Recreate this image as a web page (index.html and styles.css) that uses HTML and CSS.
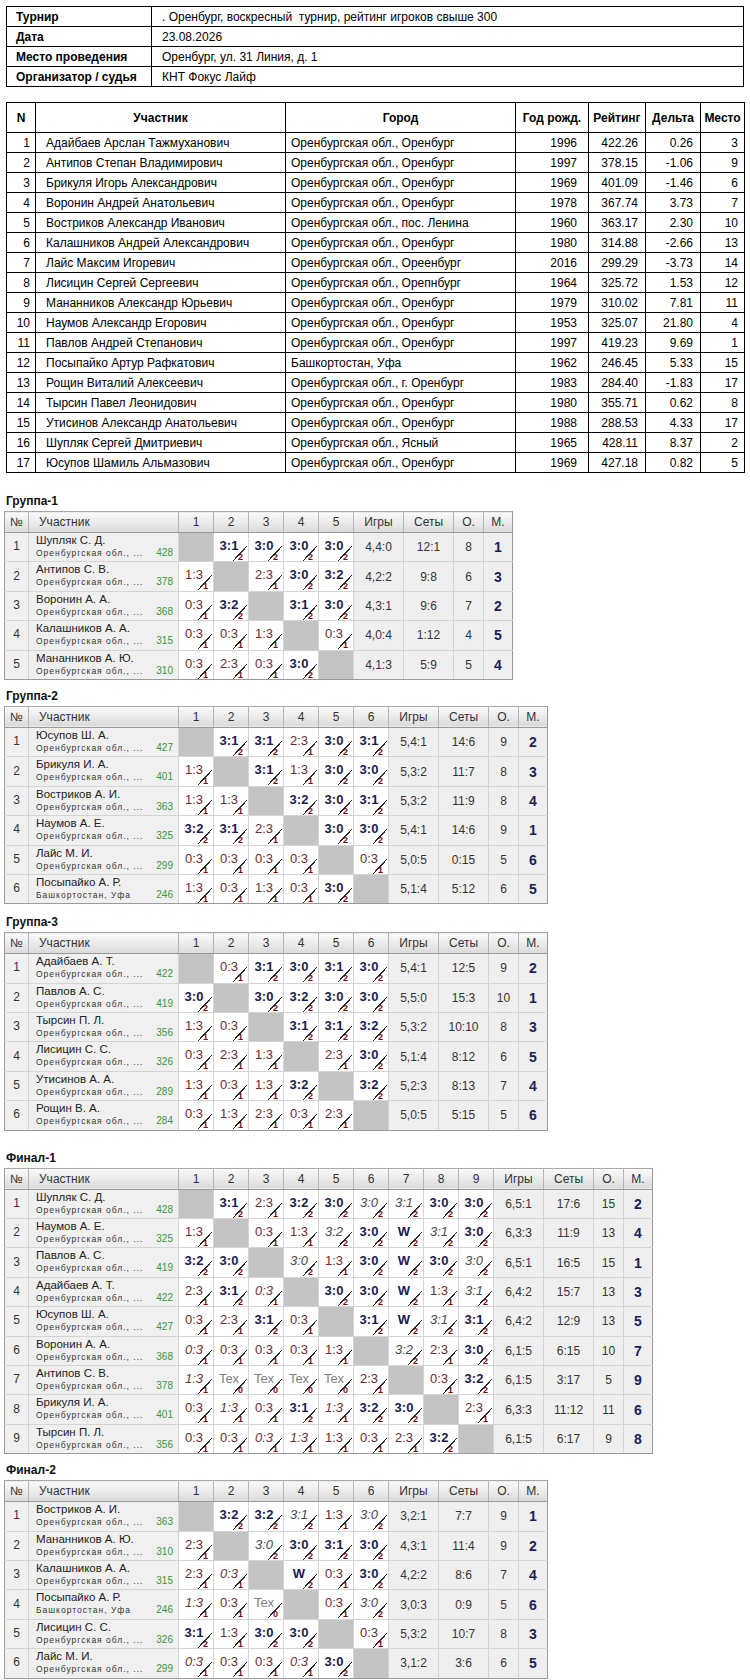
FILE: index.html
```html
<!DOCTYPE html>
<html lang="ru">
<head>
<meta charset="utf-8">
<title>Турнир</title>
<link rel="stylesheet" href="styles.css">
</head>
<body>
<div class="page">

<table class="info">
<tr><td class="k">Турнир</td><td>. Оренбург, воскресный&nbsp; турнир, рейтинг игроков свыше 300</td></tr>
<tr><td class="k">Дата</td><td>23.08.2026</td></tr>
<tr><td class="k">Место проведения</td><td>Оренбург, ул. 31 Линия, д. 1</td></tr>
<tr><td class="k">Организатор / судья</td><td>КНТ Фокус Лайф</td></tr>
</table>

<table class="main">
<colgroup><col class="c1"><col class="c2"><col class="c3"><col class="c4"><col class="c5"><col class="c6"><col class="c7"></colgroup>
<tr><th>N</th><th>Участник</th><th>Город</th><th>Год рожд.</th><th>Рейтинг</th><th>Дельта</th><th>Место</th></tr>
<tr><td class="n">1</td><td class="p">Адайбаев Арслан Тажмуханович</td><td class="c">Оренбургская обл., Оренбург</td><td class="y">1996</td><td class="rt">422.26</td><td class="d">0.26</td><td class="pl">3</td></tr>
<tr><td class="n">2</td><td class="p">Антипов Степан Владимирович</td><td class="c">Оренбургская обл., Оренбург</td><td class="y">1997</td><td class="rt">378.15</td><td class="d">-1.06</td><td class="pl">9</td></tr>
<tr><td class="n">3</td><td class="p">Брикуля Игорь Александрович</td><td class="c">Оренбургская обл., Оренбург</td><td class="y">1969</td><td class="rt">401.09</td><td class="d">-1.46</td><td class="pl">6</td></tr>
<tr><td class="n">4</td><td class="p">Воронин Андрей Анатольевич</td><td class="c">Оренбургская обл., Оренбург</td><td class="y">1978</td><td class="rt">367.74</td><td class="d">3.73</td><td class="pl">7</td></tr>
<tr><td class="n">5</td><td class="p">Востриков Александр Иванович</td><td class="c">Оренбургская обл., пос. Ленина</td><td class="y">1960</td><td class="rt">363.17</td><td class="d">2.30</td><td class="pl">10</td></tr>
<tr><td class="n">6</td><td class="p">Калашников Андрей Александрович</td><td class="c">Оренбургская обл., Оренбург</td><td class="y">1980</td><td class="rt">314.88</td><td class="d">-2.66</td><td class="pl">13</td></tr>
<tr><td class="n">7</td><td class="p">Лайс Максим Игоревич</td><td class="c">Оренбургская обл., Ореенбург</td><td class="y">2016</td><td class="rt">299.29</td><td class="d">-3.73</td><td class="pl">14</td></tr>
<tr><td class="n">8</td><td class="p">Лисицин Сергей Сергеевич</td><td class="c">Оренбургская обл., Орепнбург</td><td class="y">1964</td><td class="rt">325.72</td><td class="d">1.53</td><td class="pl">12</td></tr>
<tr><td class="n">9</td><td class="p">Мананников Александр Юрьевич</td><td class="c">Оренбургская обл., Оренбург</td><td class="y">1979</td><td class="rt">310.02</td><td class="d">7.81</td><td class="pl">11</td></tr>
<tr><td class="n">10</td><td class="p">Наумов Александр Егорович</td><td class="c">Оренбургская обл., Оренбург</td><td class="y">1953</td><td class="rt">325.07</td><td class="d">21.80</td><td class="pl">4</td></tr>
<tr><td class="n">11</td><td class="p">Павлов Андрей Степанович</td><td class="c">Оренбургская обл., Оренбург</td><td class="y">1997</td><td class="rt">419.23</td><td class="d">9.69</td><td class="pl">1</td></tr>
<tr><td class="n">12</td><td class="p">Посыпайко Артур Рафкатович</td><td class="c">Башкортостан, Уфа</td><td class="y">1962</td><td class="rt">246.45</td><td class="d">5.33</td><td class="pl">15</td></tr>
<tr><td class="n">13</td><td class="p">Рощин Виталий Алексеевич</td><td class="c">Оренбургская обл., г. Оренбург</td><td class="y">1983</td><td class="rt">284.40</td><td class="d">-1.83</td><td class="pl">17</td></tr>
<tr><td class="n">14</td><td class="p">Тырсин Павел Леонидович</td><td class="c">Оренбургская обл., Оренбург</td><td class="y">1980</td><td class="rt">355.71</td><td class="d">0.62</td><td class="pl">8</td></tr>
<tr><td class="n">15</td><td class="p">Утисинов Александр Анатольевич</td><td class="c">Оренбургская обл., Оренбург</td><td class="y">1988</td><td class="rt">288.53</td><td class="d">4.33</td><td class="pl">17</td></tr>
<tr><td class="n">16</td><td class="p">Шупляк Сергей Дмитриевич</td><td class="c">Оренбургская обл., Ясный</td><td class="y">1965</td><td class="rt">428.11</td><td class="d">8.37</td><td class="pl">2</td></tr>
<tr><td class="n">17</td><td class="p">Юсупов Шамиль Альмазович</td><td class="c">Оренбургская обл., Оренбург</td><td class="y">1969</td><td class="rt">427.18</td><td class="d">0.82</td><td class="pl">5</td></tr>
</table>

<h3 class="gt first">Группа-1</h3>
<table class="g g5">
<colgroup><col class="cn"><col class="cp"><col class="cs"><col class="cs"><col class="cs"><col class="cs"><col class="cs"><col class="cg"><col class="cg"><col class="co"><col class="cm"></colgroup>
<tr><th class="hn">№</th><th class="hp">Участник</th><th>1</th><th>2</th><th>3</th><th>4</th><th>5</th><th>Игры</th><th>Сеты</th><th>О.</th><th>М.</th></tr>
<tr class="r"><td class="no">1</td><td class="pn"><span class="nm">Шупляк С. Д.</span><span class="rg">Оренбургская обл., ...<em>428</em></span></td>
<td class="x"></td><td class="w"><span>3:1</span><sub>2</sub></td><td class="w"><span>3:0</span><sub>2</sub></td><td class="w"><span>3:0</span><sub>2</sub></td><td class="w"><span>3:0</span><sub>2</sub></td>
<td class="st">4,4:0</td><td class="st">12:1</td><td class="st">8</td><td class="m">1</td></tr>
<tr class="r"><td class="no">2</td><td class="pn"><span class="nm">Антипов С. В.</span><span class="rg">Оренбургская обл., ...<em>378</em></span></td>
<td class="l"><span>1:3</span><sub>1</sub></td><td class="x"></td><td class="l"><span>2:3</span><sub>1</sub></td><td class="w"><span>3:0</span><sub>2</sub></td><td class="w"><span>3:2</span><sub>2</sub></td>
<td class="st">4,2:2</td><td class="st">9:8</td><td class="st">6</td><td class="m">3</td></tr>
<tr class="r"><td class="no">3</td><td class="pn"><span class="nm">Воронин А. А.</span><span class="rg">Оренбургская обл., ...<em>368</em></span></td>
<td class="l"><span>0:3</span><sub>1</sub></td><td class="w"><span>3:2</span><sub>2</sub></td><td class="x"></td><td class="w"><span>3:1</span><sub>2</sub></td><td class="w"><span>3:0</span><sub>2</sub></td>
<td class="st">4,3:1</td><td class="st">9:6</td><td class="st">7</td><td class="m">2</td></tr>
<tr class="r"><td class="no">4</td><td class="pn"><span class="nm">Калашников А. А.</span><span class="rg">Оренбургская обл., ...<em>315</em></span></td>
<td class="l"><span>0:3</span><sub>1</sub></td><td class="l"><span>0:3</span><sub>1</sub></td><td class="l"><span>1:3</span><sub>1</sub></td><td class="x"></td><td class="l"><span>0:3</span><sub>1</sub></td>
<td class="st">4,0:4</td><td class="st">1:12</td><td class="st">4</td><td class="m">5</td></tr>
<tr class="r"><td class="no">5</td><td class="pn"><span class="nm">Мананников А. Ю.</span><span class="rg">Оренбургская обл., ...<em>310</em></span></td>
<td class="l"><span>0:3</span><sub>1</sub></td><td class="l"><span>2:3</span><sub>1</sub></td><td class="l"><span>0:3</span><sub>1</sub></td><td class="w"><span>3:0</span><sub>2</sub></td><td class="x"></td>
<td class="st">4,1:3</td><td class="st">5:9</td><td class="st">5</td><td class="m">4</td></tr>
</table>

<h3 class="gt">Группа-2</h3>
<table class="g g6">
<colgroup><col class="cn"><col class="cp"><col class="cs"><col class="cs"><col class="cs"><col class="cs"><col class="cs"><col class="cs"><col class="cg"><col class="cg"><col class="co"><col class="cm"></colgroup>
<tr><th class="hn">№</th><th class="hp">Участник</th><th>1</th><th>2</th><th>3</th><th>4</th><th>5</th><th>6</th><th>Игры</th><th>Сеты</th><th>О.</th><th>М.</th></tr>
<tr class="r"><td class="no">1</td><td class="pn"><span class="nm">Юсупов Ш. А.</span><span class="rg">Оренбургская обл., ...<em>427</em></span></td>
<td class="x"></td><td class="w"><span>3:1</span><sub>2</sub></td><td class="w"><span>3:1</span><sub>2</sub></td><td class="l"><span>2:3</span><sub>1</sub></td><td class="w"><span>3:0</span><sub>2</sub></td><td class="w"><span>3:1</span><sub>2</sub></td>
<td class="st">5,4:1</td><td class="st">14:6</td><td class="st">9</td><td class="m">2</td></tr>
<tr class="r"><td class="no">2</td><td class="pn"><span class="nm">Брикуля И. А.</span><span class="rg">Оренбургская обл., ...<em>401</em></span></td>
<td class="l"><span>1:3</span><sub>1</sub></td><td class="x"></td><td class="w"><span>3:1</span><sub>2</sub></td><td class="l"><span>1:3</span><sub>1</sub></td><td class="w"><span>3:0</span><sub>2</sub></td><td class="w"><span>3:0</span><sub>2</sub></td>
<td class="st">5,3:2</td><td class="st">11:7</td><td class="st">8</td><td class="m">3</td></tr>
<tr class="r"><td class="no">3</td><td class="pn"><span class="nm">Востриков А. И.</span><span class="rg">Оренбургская обл., ...<em>363</em></span></td>
<td class="l"><span>1:3</span><sub>1</sub></td><td class="l"><span>1:3</span><sub>1</sub></td><td class="x"></td><td class="w"><span>3:2</span><sub>2</sub></td><td class="w"><span>3:0</span><sub>2</sub></td><td class="w"><span>3:1</span><sub>2</sub></td>
<td class="st">5,3:2</td><td class="st">11:9</td><td class="st">8</td><td class="m">4</td></tr>
<tr class="r"><td class="no">4</td><td class="pn"><span class="nm">Наумов А. Е.</span><span class="rg">Оренбургская обл., ...<em>325</em></span></td>
<td class="w"><span>3:2</span><sub>2</sub></td><td class="w"><span>3:1</span><sub>2</sub></td><td class="l"><span>2:3</span><sub>1</sub></td><td class="x"></td><td class="w"><span>3:0</span><sub>2</sub></td><td class="w"><span>3:0</span><sub>2</sub></td>
<td class="st">5,4:1</td><td class="st">14:6</td><td class="st">9</td><td class="m">1</td></tr>
<tr class="r"><td class="no">5</td><td class="pn"><span class="nm">Лайс М. И.</span><span class="rg">Оренбургская обл., ...<em>299</em></span></td>
<td class="l"><span>0:3</span><sub>1</sub></td><td class="l"><span>0:3</span><sub>1</sub></td><td class="l"><span>0:3</span><sub>1</sub></td><td class="l"><span>0:3</span><sub>1</sub></td><td class="x"></td><td class="l"><span>0:3</span><sub>1</sub></td>
<td class="st">5,0:5</td><td class="st">0:15</td><td class="st">5</td><td class="m">6</td></tr>
<tr class="r"><td class="no">6</td><td class="pn"><span class="nm">Посыпайко А. Р.</span><span class="rg">Башкортостан, Уфа<em>246</em></span></td>
<td class="l"><span>1:3</span><sub>1</sub></td><td class="l"><span>0:3</span><sub>1</sub></td><td class="l"><span>1:3</span><sub>1</sub></td><td class="l"><span>0:3</span><sub>1</sub></td><td class="w"><span>3:0</span><sub>2</sub></td><td class="x"></td>
<td class="st">5,1:4</td><td class="st">5:12</td><td class="st">6</td><td class="m">5</td></tr>
</table>

<h3 class="gt g3t">Группа-3</h3>
<table class="g g6">
<colgroup><col class="cn"><col class="cp"><col class="cs"><col class="cs"><col class="cs"><col class="cs"><col class="cs"><col class="cs"><col class="cg"><col class="cg"><col class="co"><col class="cm"></colgroup>
<tr><th class="hn">№</th><th class="hp">Участник</th><th>1</th><th>2</th><th>3</th><th>4</th><th>5</th><th>6</th><th>Игры</th><th>Сеты</th><th>О.</th><th>М.</th></tr>
<tr class="r"><td class="no">1</td><td class="pn"><span class="nm">Адайбаев А. Т.</span><span class="rg">Оренбургская обл., ...<em>422</em></span></td>
<td class="x"></td><td class="l"><span>0:3</span><sub>1</sub></td><td class="w"><span>3:1</span><sub>2</sub></td><td class="w"><span>3:0</span><sub>2</sub></td><td class="w"><span>3:1</span><sub>2</sub></td><td class="w"><span>3:0</span><sub>2</sub></td>
<td class="st">5,4:1</td><td class="st">12:5</td><td class="st">9</td><td class="m">2</td></tr>
<tr class="r"><td class="no">2</td><td class="pn"><span class="nm">Павлов А. С.</span><span class="rg">Оренбургская обл., ...<em>419</em></span></td>
<td class="w"><span>3:0</span><sub>2</sub></td><td class="x"></td><td class="w"><span>3:0</span><sub>2</sub></td><td class="w"><span>3:2</span><sub>2</sub></td><td class="w"><span>3:0</span><sub>2</sub></td><td class="w"><span>3:0</span><sub>2</sub></td>
<td class="st">5,5:0</td><td class="st">15:3</td><td class="st">10</td><td class="m">1</td></tr>
<tr class="r"><td class="no">3</td><td class="pn"><span class="nm">Тырсин П. Л.</span><span class="rg">Оренбургская обл., ...<em>356</em></span></td>
<td class="l"><span>1:3</span><sub>1</sub></td><td class="l"><span>0:3</span><sub>1</sub></td><td class="x"></td><td class="w"><span>3:1</span><sub>2</sub></td><td class="w"><span>3:1</span><sub>2</sub></td><td class="w"><span>3:2</span><sub>2</sub></td>
<td class="st">5,3:2</td><td class="st">10:10</td><td class="st">8</td><td class="m">3</td></tr>
<tr class="r"><td class="no">4</td><td class="pn"><span class="nm">Лисицин С. С.</span><span class="rg">Оренбургская обл., ...<em>326</em></span></td>
<td class="l"><span>0:3</span><sub>1</sub></td><td class="l"><span>2:3</span><sub>1</sub></td><td class="l"><span>1:3</span><sub>1</sub></td><td class="x"></td><td class="l"><span>2:3</span><sub>1</sub></td><td class="w"><span>3:0</span><sub>2</sub></td>
<td class="st">5,1:4</td><td class="st">8:12</td><td class="st">6</td><td class="m">5</td></tr>
<tr class="r"><td class="no">5</td><td class="pn"><span class="nm">Утисинов А. А.</span><span class="rg">Оренбургская обл., ...<em>289</em></span></td>
<td class="l"><span>1:3</span><sub>1</sub></td><td class="l"><span>0:3</span><sub>1</sub></td><td class="l"><span>1:3</span><sub>1</sub></td><td class="w"><span>3:2</span><sub>2</sub></td><td class="x"></td><td class="w"><span>3:2</span><sub>2</sub></td>
<td class="st">5,2:3</td><td class="st">8:13</td><td class="st">7</td><td class="m">4</td></tr>
<tr class="r"><td class="no">6</td><td class="pn"><span class="nm">Рощин В. А.</span><span class="rg">Оренбургская обл., ...<em>284</em></span></td>
<td class="l"><span>0:3</span><sub>1</sub></td><td class="l"><span>1:3</span><sub>1</sub></td><td class="l"><span>2:3</span><sub>1</sub></td><td class="l"><span>0:3</span><sub>1</sub></td><td class="l"><span>2:3</span><sub>1</sub></td><td class="x"></td>
<td class="st">5,0:5</td><td class="st">5:15</td><td class="st">5</td><td class="m">6</td></tr>
</table>

<h3 class="gt wide">Финал-1</h3>
<table class="g g9">
<colgroup><col class="cn"><col class="cp"><col class="cs"><col class="cs"><col class="cs"><col class="cs"><col class="cs"><col class="cs"><col class="cs"><col class="cs"><col class="cs"><col class="cg"><col class="cg"><col class="co"><col class="cm"></colgroup>
<tr><th class="hn">№</th><th class="hp">Участник</th><th>1</th><th>2</th><th>3</th><th>4</th><th>5</th><th>6</th><th>7</th><th>8</th><th>9</th><th>Игры</th><th>Сеты</th><th>О.</th><th>М.</th></tr>
<tr class="r"><td class="no">1</td><td class="pn"><span class="nm">Шупляк С. Д.</span><span class="rg">Оренбургская обл., ...<em>428</em></span></td>
<td class="x"></td><td class="w"><span>3:1</span><sub>2</sub></td><td class="l"><span>2:3</span><sub>1</sub></td><td class="w"><span>3:2</span><sub>2</sub></td><td class="w"><span>3:0</span><sub>2</sub></td><td class="wi"><span>3:0</span><sub>2</sub></td><td class="wi"><span>3:1</span><sub>2</sub></td><td class="w"><span>3:0</span><sub>2</sub></td><td class="w"><span>3:0</span><sub>2</sub></td>
<td class="st">6,5:1</td><td class="st">17:6</td><td class="st">15</td><td class="m">2</td></tr>
<tr class="r"><td class="no">2</td><td class="pn"><span class="nm">Наумов А. Е.</span><span class="rg">Оренбургская обл., ...<em>325</em></span></td>
<td class="l"><span>1:3</span><sub>1</sub></td><td class="x"></td><td class="l"><span>0:3</span><sub>1</sub></td><td class="l"><span>1:3</span><sub>1</sub></td><td class="wi"><span>3:2</span><sub>2</sub></td><td class="w"><span>3:0</span><sub>2</sub></td><td class="w"><span>W</span><sub>2</sub></td><td class="wi"><span>3:1</span><sub>2</sub></td><td class="w"><span>3:0</span><sub>2</sub></td>
<td class="st">6,3:3</td><td class="st">11:9</td><td class="st">13</td><td class="m">4</td></tr>
<tr class="r"><td class="no">3</td><td class="pn"><span class="nm">Павлов А. С.</span><span class="rg">Оренбургская обл., ...<em>419</em></span></td>
<td class="w"><span>3:2</span><sub>2</sub></td><td class="w"><span>3:0</span><sub>2</sub></td><td class="x"></td><td class="wi"><span>3:0</span><sub>2</sub></td><td class="l"><span>1:3</span><sub>1</sub></td><td class="w"><span>3:0</span><sub>2</sub></td><td class="w"><span>W</span><sub>2</sub></td><td class="w"><span>3:0</span><sub>2</sub></td><td class="wi"><span>3:0</span><sub>2</sub></td>
<td class="st">6,5:1</td><td class="st">16:5</td><td class="st">15</td><td class="m">1</td></tr>
<tr class="r"><td class="no">4</td><td class="pn"><span class="nm">Адайбаев А. Т.</span><span class="rg">Оренбургская обл., ...<em>422</em></span></td>
<td class="l"><span>2:3</span><sub>1</sub></td><td class="w"><span>3:1</span><sub>2</sub></td><td class="li"><span>0:3</span><sub>1</sub></td><td class="x"></td><td class="w"><span>3:0</span><sub>2</sub></td><td class="w"><span>3:0</span><sub>2</sub></td><td class="w"><span>W</span><sub>2</sub></td><td class="l"><span>1:3</span><sub>1</sub></td><td class="wi"><span>3:1</span><sub>2</sub></td>
<td class="st">6,4:2</td><td class="st">15:7</td><td class="st">13</td><td class="m">3</td></tr>
<tr class="r"><td class="no">5</td><td class="pn"><span class="nm">Юсупов Ш. А.</span><span class="rg">Оренбургская обл., ...<em>427</em></span></td>
<td class="l"><span>0:3</span><sub>1</sub></td><td class="l"><span>2:3</span><sub>1</sub></td><td class="w"><span>3:1</span><sub>2</sub></td><td class="l"><span>0:3</span><sub>1</sub></td><td class="x"></td><td class="w"><span>3:1</span><sub>2</sub></td><td class="w"><span>W</span><sub>2</sub></td><td class="wi"><span>3:1</span><sub>2</sub></td><td class="w"><span>3:1</span><sub>2</sub></td>
<td class="st">6,4:2</td><td class="st">12:9</td><td class="st">13</td><td class="m">5</td></tr>
<tr class="r"><td class="no">6</td><td class="pn"><span class="nm">Воронин А. А.</span><span class="rg">Оренбургская обл., ...<em>368</em></span></td>
<td class="li"><span>0:3</span><sub>1</sub></td><td class="l"><span>0:3</span><sub>1</sub></td><td class="l"><span>0:3</span><sub>1</sub></td><td class="l"><span>0:3</span><sub>1</sub></td><td class="l"><span>1:3</span><sub>1</sub></td><td class="x"></td><td class="wi"><span>3:2</span><sub>2</sub></td><td class="l"><span>2:3</span><sub>1</sub></td><td class="w"><span>3:0</span><sub>2</sub></td>
<td class="st">6,1:5</td><td class="st">6:15</td><td class="st">10</td><td class="m">7</td></tr>
<tr class="r"><td class="no">7</td><td class="pn"><span class="nm">Антипов С. В.</span><span class="rg">Оренбургская обл., ...<em>378</em></span></td>
<td class="li"><span>1:3</span><sub>1</sub></td><td class="t"><span>Tex</span><sub>0</sub></td><td class="t"><span>Tex</span><sub>0</sub></td><td class="t"><span>Tex</span><sub>0</sub></td><td class="t"><span>Tex</span><sub>0</sub></td><td class="l"><span>2:3</span><sub>1</sub></td><td class="x"></td><td class="l"><span>0:3</span><sub>1</sub></td><td class="w"><span>3:2</span><sub>2</sub></td>
<td class="st">6,1:5</td><td class="st">3:17</td><td class="st">5</td><td class="m">9</td></tr>
<tr class="r"><td class="no">8</td><td class="pn"><span class="nm">Брикуля И. А.</span><span class="rg">Оренбургская обл., ...<em>401</em></span></td>
<td class="l"><span>0:3</span><sub>1</sub></td><td class="li"><span>1:3</span><sub>1</sub></td><td class="l"><span>0:3</span><sub>1</sub></td><td class="w"><span>3:1</span><sub>2</sub></td><td class="li"><span>1:3</span><sub>1</sub></td><td class="w"><span>3:2</span><sub>2</sub></td><td class="w"><span>3:0</span><sub>2</sub></td><td class="x"></td><td class="l"><span>2:3</span><sub>1</sub></td>
<td class="st">6,3:3</td><td class="st">11:12</td><td class="st">11</td><td class="m">6</td></tr>
<tr class="r"><td class="no">9</td><td class="pn"><span class="nm">Тырсин П. Л.</span><span class="rg">Оренбургская обл., ...<em>356</em></span></td>
<td class="l"><span>0:3</span><sub>1</sub></td><td class="l"><span>0:3</span><sub>1</sub></td><td class="li"><span>0:3</span><sub>1</sub></td><td class="li"><span>1:3</span><sub>1</sub></td><td class="l"><span>1:3</span><sub>1</sub></td><td class="l"><span>0:3</span><sub>1</sub></td><td class="l"><span>2:3</span><sub>1</sub></td><td class="w"><span>3:2</span><sub>2</sub></td><td class="x"></td>
<td class="st">6,1:5</td><td class="st">6:17</td><td class="st">9</td><td class="m">8</td></tr>
</table>

<h3 class="gt">Финал-2</h3>
<table class="g g6">
<colgroup><col class="cn"><col class="cp"><col class="cs"><col class="cs"><col class="cs"><col class="cs"><col class="cs"><col class="cs"><col class="cg"><col class="cg"><col class="co"><col class="cm"></colgroup>
<tr><th class="hn">№</th><th class="hp">Участник</th><th>1</th><th>2</th><th>3</th><th>4</th><th>5</th><th>6</th><th>Игры</th><th>Сеты</th><th>О.</th><th>М.</th></tr>
<tr class="r"><td class="no">1</td><td class="pn"><span class="nm">Востриков А. И.</span><span class="rg">Оренбургская обл., ...<em>363</em></span></td>
<td class="x"></td><td class="w"><span>3:2</span><sub>2</sub></td><td class="w"><span>3:2</span><sub>2</sub></td><td class="wi"><span>3:1</span><sub>2</sub></td><td class="l"><span>1:3</span><sub>1</sub></td><td class="wi"><span>3:0</span><sub>2</sub></td>
<td class="st">3,2:1</td><td class="st">7:7</td><td class="st">9</td><td class="m">1</td></tr>
<tr class="r"><td class="no">2</td><td class="pn"><span class="nm">Мананников А. Ю.</span><span class="rg">Оренбургская обл., ...<em>310</em></span></td>
<td class="l"><span>2:3</span><sub>1</sub></td><td class="x"></td><td class="wi"><span>3:0</span><sub>2</sub></td><td class="w"><span>3:0</span><sub>2</sub></td><td class="w"><span>3:1</span><sub>2</sub></td><td class="w"><span>3:0</span><sub>2</sub></td>
<td class="st">4,3:1</td><td class="st">11:4</td><td class="st">9</td><td class="m">2</td></tr>
<tr class="r"><td class="no">3</td><td class="pn"><span class="nm">Калашников А. А.</span><span class="rg">Оренбургская обл., ...<em>315</em></span></td>
<td class="l"><span>2:3</span><sub>1</sub></td><td class="li"><span>0:3</span><sub>1</sub></td><td class="x"></td><td class="w"><span>W</span><sub>2</sub></td><td class="l"><span>0:3</span><sub>1</sub></td><td class="w"><span>3:0</span><sub>2</sub></td>
<td class="st">4,2:2</td><td class="st">8:6</td><td class="st">7</td><td class="m">4</td></tr>
<tr class="r"><td class="no">4</td><td class="pn"><span class="nm">Посыпайко А. Р.</span><span class="rg">Башкортостан, Уфа<em>246</em></span></td>
<td class="li"><span>1:3</span><sub>1</sub></td><td class="l"><span>0:3</span><sub>1</sub></td><td class="t"><span>Tex</span><sub>0</sub></td><td class="x"></td><td class="l"><span>0:3</span><sub>1</sub></td><td class="wi"><span>3:0</span><sub>2</sub></td>
<td class="st">3,0:3</td><td class="st">0:9</td><td class="st">5</td><td class="m">6</td></tr>
<tr class="r"><td class="no">5</td><td class="pn"><span class="nm">Лисицин С. С.</span><span class="rg">Оренбургская обл., ...<em>326</em></span></td>
<td class="w"><span>3:1</span><sub>2</sub></td><td class="l"><span>1:3</span><sub>1</sub></td><td class="w"><span>3:0</span><sub>2</sub></td><td class="w"><span>3:0</span><sub>2</sub></td><td class="x"></td><td class="l"><span>0:3</span><sub>1</sub></td>
<td class="st">5,3:2</td><td class="st">10:7</td><td class="st">8</td><td class="m">3</td></tr>
<tr class="r"><td class="no">6</td><td class="pn"><span class="nm">Лайс М. И.</span><span class="rg">Оренбургская обл., ...<em>299</em></span></td>
<td class="li"><span>0:3</span><sub>1</sub></td><td class="l"><span>0:3</span><sub>1</sub></td><td class="l"><span>0:3</span><sub>1</sub></td><td class="li"><span>0:3</span><sub>1</sub></td><td class="w"><span>3:0</span><sub>2</sub></td><td class="x"></td>
<td class="st">3,1:2</td><td class="st">3:6</td><td class="st">6</td><td class="m">5</td></tr>
</table>

</div>
</body>
</html>
```

FILE: styles.css
```css
* { box-sizing: border-box; }
body {
  margin: 0;
  background: #fff;
  color: #000;
  font-family: "Liberation Sans", Arial, sans-serif;
}
.page { padding: 6px 6px 0; }
table { border-collapse: collapse; table-layout: fixed; border-spacing: 0; }

/* info table */
.info { width: 738px; font-size: 12px; }
.info tr { height: 20px; }
.info td { border: 1px solid #000; padding: 0 0 0 10px; white-space: nowrap; }
.info td.k { width: 145px; font-weight: bold; padding-left: 9px; }

/* main table */
.main { width: 738px; margin-top: 15px; font-size: 12px; }
.main .c1 { width: 29px; }
.main .c2 { width: 250px; }
.main .c3 { width: 230px; }
.main .c4 { width: 73px; }
.main .c5 { width: 57px; }
.main .c6 { width: 55px; }
.main .c7 { width: 44px; }
.main tr { height: 20px; }
.main tr:first-child { height: 30px; }
.main th { border: 1px solid #000; font-weight: bold; text-align: center; padding: 0; }
.main td { border: 1px solid #000; padding: 0; white-space: nowrap; }
.main td.n { text-align: right; padding-right: 5px; }
.main td.p { padding-left: 10px; }
.main td.c { padding-left: 5px; }
.main td.y { text-align: right; padding-right: 11px; }
.main td.rt, .main td.d { text-align: right; padding-right: 7px; }
.main td.pl { text-align: right; padding-right: 6px; }

/* group titles */
.gt {
  margin: 8px 0 2px;
  font-size: 12px;
  line-height: 16px;
  font-weight: bold;
  color: #111;
}
.gt.first { margin-top: 20px; }
.gt.g3t { margin-top: 10px; }
.gt.wide { margin-top: 19px; }

/* group tables */
.g { margin-left: -2px; color: #333; font-size: 12px; }
.g .cn { width: 24px; }
.g .cp { width: 150px; }
.g .cs { width: 35px; }
.g .cg { width: 50px; }
.g .co { width: 30px; }
.g .cm { width: 29px; }
.g5 { width: 508px; }
.g6 { width: 543px; }
.g9 { width: 648px; }

.g tr { height: 21px; }
.g tr.r { height: 29.4px; }
.g th {
  padding: 0;
  font-weight: normal;
  text-align: center;
  color: #333;
  background: linear-gradient(#fbfbfb, #dadada);
  border: 1px solid #b4b4b4;
  border-bottom-color: #9a9a9a;
}
.g th.hn { text-align: left; padding-left: 5px; }
.g th.hp { text-align: left; padding-left: 10px; }

.g tr > :first-child { border-left-color: #9a9a9a; }
.g tr > :last-child { border-right-color: #9a9a9a; }
.g tr:first-child > * { border-top-color: #a8a8a8; }
.g tr:last-child > td { border-bottom-color: #9a9a9a; }

/* default body cell = score cell with diagonal stroke */
.g td {
  padding: 0;
  border: 1px solid #d4d4d4;
  vertical-align: top;
  background: #fff linear-gradient(to bottom right,
      transparent calc(50% - 0.6px), #2b2b2b calc(50% - 0.6px),
      #2b2b2b calc(50% + 0.6px), transparent calc(50% + 0.6px))
    no-repeat 19px 13px / 14px 15px;
}
.g td span {
  display: block;
  font-size: 13px;
  line-height: 15px;
  padding: 5px 4px 0 0;
  text-align: center;
  white-space: nowrap;
}
.g td sub {
  display: block;
  font-size: 9px;
  line-height: 8px;
  font-weight: bold;
  color: #7a0c0c;
  text-align: right;
  padding-right: 5px;
  vertical-align: baseline;
}
.g td.w span { font-weight: bold; color: #1c1c4e; }
.g td.l span { color: #6a2c2c; }
.g td.wi span { font-style: italic; color: #4a4a4a; }
.g td.li span { font-style: italic; color: #6a3636; }
.g td.t span { color: #808080; }

.g td.x { background: #c4c4c4; }

.g td.no {
  background: #f0f0f0;
  text-align: center;
  vertical-align: middle;
  font-size: 12px;
  padding-bottom: 2px;
}
.g td.pn {
  background: #f0f0f0;
  padding: 1px 5px 0 7px;
}
.g td.pn .nm {
  display: block;
  font-size: 11.5px;
  line-height: 13px;
  padding: 0;
  text-align: left;
  color: #222;
}
.g td.pn .rg {
  display: flex;
  justify-content: space-between;
  align-items: baseline;
  font-size: 8.5px;
  line-height: 12px;
  letter-spacing: 1px;
  padding: 0;
  color: #333;
}
.g td.pn .rg em {
  font-style: normal;
  font-size: 10px;
  letter-spacing: 0;
  color: #3a963a;
}
.g td.st {
  background: #efefef;
  text-align: center;
  vertical-align: middle;
  color: #333;
}
.g td.m {
  background: #efefef;
  text-align: center;
  vertical-align: middle;
  font-weight: bold;
  font-size: 14px;
  color: #1e1e5a;
}
```
